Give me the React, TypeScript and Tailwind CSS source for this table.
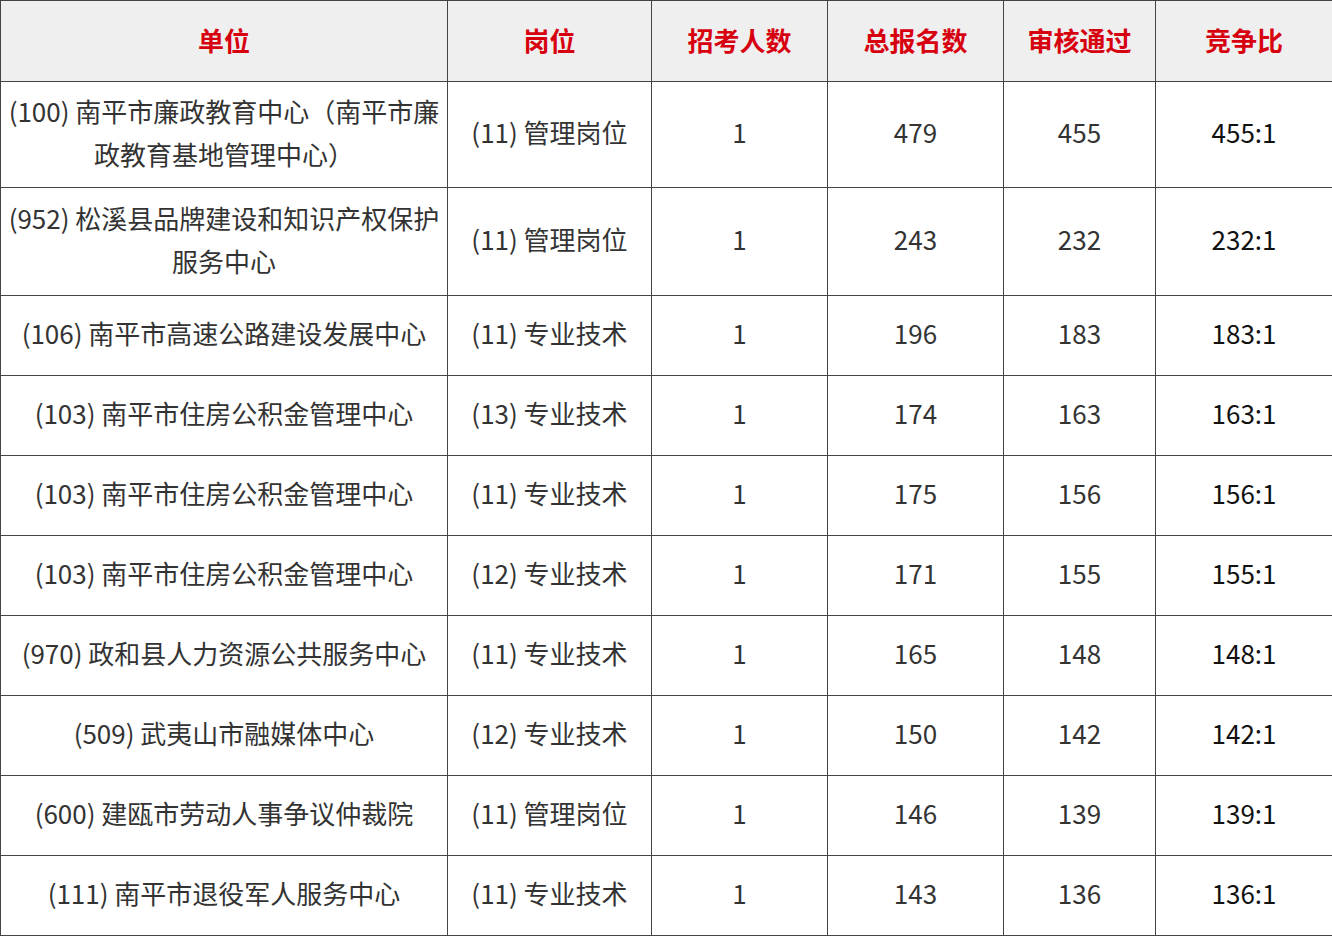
const headers = ["单位", "岗位", "招考人数", "总报名数", "审核通过", "竞争比"];

type Row = { unit: React.ReactNode; post: string; plan: string; total: string; pass: string; ratio: string; h: string };

const rows: Row[] = [
  {
    unit: (
      <>
        (100) 南平市廉政教育中心（南平市廉
        <br />
        政教育基地管理中心）
      </>
    ),
    post: "(11) 管理岗位",
    plan: "1",
    total: "479",
    pass: "455",
    ratio: "455:1",
    h: "h-[106px]",
  },
  {
    unit: (
      <>
        (952) 松溪县品牌建设和知识产权保护
        <br />
        服务中心
      </>
    ),
    post: "(11) 管理岗位",
    plan: "1",
    total: "243",
    pass: "232",
    ratio: "232:1",
    h: "h-[108px]",
  },
  { unit: "(106) 南平市高速公路建设发展中心", post: "(11) 专业技术", plan: "1", total: "196", pass: "183", ratio: "183:1", h: "h-[80px]" },
  { unit: "(103) 南平市住房公积金管理中心", post: "(13) 专业技术", plan: "1", total: "174", pass: "163", ratio: "163:1", h: "h-[80px]" },
  { unit: "(103) 南平市住房公积金管理中心", post: "(11) 专业技术", plan: "1", total: "175", pass: "156", ratio: "156:1", h: "h-[80px]" },
  { unit: "(103) 南平市住房公积金管理中心", post: "(12) 专业技术", plan: "1", total: "171", pass: "155", ratio: "155:1", h: "h-[80px]" },
  { unit: "(970) 政和县人力资源公共服务中心", post: "(11) 专业技术", plan: "1", total: "165", pass: "148", ratio: "148:1", h: "h-[80px]" },
  { unit: "(509) 武夷山市融媒体中心", post: "(12) 专业技术", plan: "1", total: "150", pass: "142", ratio: "142:1", h: "h-[80px]" },
  { unit: "(600) 建瓯市劳动人事争议仲裁院", post: "(11) 管理岗位", plan: "1", total: "146", pass: "139", ratio: "139:1", h: "h-[80px]" },
  { unit: "(111) 南平市退役军人服务中心", post: "(11) 专业技术", plan: "1", total: "143", pass: "136", ratio: "136:1", h: "h-[80px]" },
];

const cell = "border border-[#444] text-center align-middle px-1";

export default function App() {
  return (
    <div className="w-[1332px] bg-white font-['Noto_Sans_CJK_SC','Noto_Sans',sans-serif] text-[26px] leading-[43px] text-[#333]">
      <table className="w-[1332px] table-fixed border-collapse">
        <colgroup>
          <col className="w-[447px]" />
          <col className="w-[204px]" />
          <col className="w-[176px]" />
          <col className="w-[176px]" />
          <col className="w-[152px]" />
          <col className="w-[177px]" />
        </colgroup>
        <thead>
          <tr className="h-[81px] bg-[#efefef]">
            {headers.map((t) => (
              <th key={t} className={`${cell} pb-[4px] font-bold text-[#d7000f]`}>
                {t}
              </th>
            ))}
          </tr>
        </thead>
        <tbody>
          {rows.map((r, i) => (
            <tr key={i} className={r.h}>
              <td className={`${cell} pb-[6px] whitespace-nowrap`}>{r.unit}</td>
              <td className={`${cell} pb-[6px]`}>{r.post}</td>
              <td className={`${cell} pb-[6px]`}>{r.plan}</td>
              <td className={`${cell} pb-[6px]`}>{r.total}</td>
              <td className={`${cell} pb-[6px]`}>{r.pass}</td>
              <td className={`${cell} pb-[6px] text-[#111]`}>{r.ratio}</td>
            </tr>
          ))}
        </tbody>
      </table>
    </div>
  );
}
